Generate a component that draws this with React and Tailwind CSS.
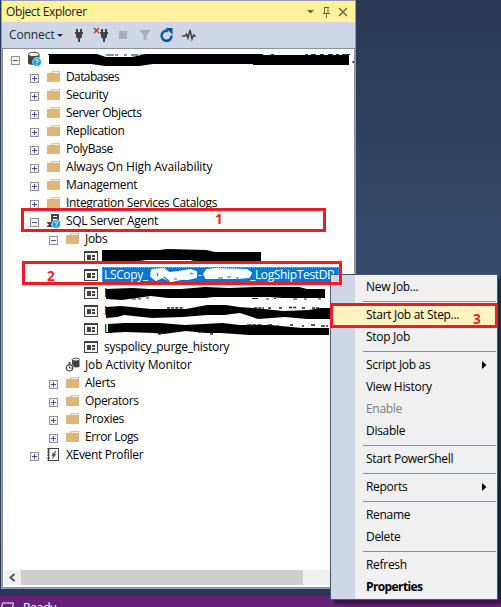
import React from "react";

const INK = "#424242";

function Expander({ open }) {
  return (
    <svg className="mt-[3px] h-[9px] w-[9px] shrink-0" viewBox="0 0 9 9" shapeRendering="crispEdges">
      <rect x="0.5" y="0.5" width="8" height="8" fill="#f4f4f4" stroke="#919191" />
      <path d="M2 4.5h5" stroke="#3a55a4" />
      {!open && <path d="M4.5 2v5" stroke="#3a55a4" />}
    </svg>
  );
}

function Folder() {
  return (
    <svg className="h-4 w-4" viewBox="0 0 16 16">
      <path d="M1 4h3.500l1.500-2h8v11H1z" fill="#dcb67a" />
      <path d="M5.800 4l.9-1.200h6.400V4z" fill="#f8f0e2" />
    </svg>
  );
}

function Help({ x, y }) {
  return (
    <g>
      <circle cx={x} cy={y} r="4" fill="#1ba1e2" />
      <path d={`M${x - 1.3} ${y - 1}c0-2 2.8-1.7 2.6 0c0 .9-1.3.8-1.3 1.8M${x} ${y + 1.7}v1`} fill="none" stroke="#fff" strokeWidth="1" />
    </g>
  );
}

function Server() {
  return (
    <svg className="h-4 w-4" viewBox="0 0 16 16">
      <path d="M1 3.5v8.6c0 1.2 2.3 2 5.5 2s6-.8 6-2V3.5z" fill={INK} />
      <ellipse cx="6.8" cy="3.4" rx="5.3" ry="2.1" fill="#f6f6f6" stroke={INK} strokeWidth="1" />
      <circle cx="10" cy="11" r="4.7" fill="#f6f6f6" />
      <Help x={10} y={11} />
    </svg>
  );
}

function Agent() {
  return (
    <svg className="h-4 w-4" viewBox="0 0 16 16">
      <path d="M5 1h8v9H5z" fill={INK} />
      <path d="M7 3.5h4M7 6.5h4" stroke="#fff" />
      <path d="M1 9h6v1L4.8 11.6 7 13v1H1v-1l2-1.4L1 10z" fill={INK} />
      <circle cx="10.2" cy="11" r="4.7" fill="#fff" />
      <Help x={10.2} y={11} />
    </svg>
  );
}

function Job() {
  return (
    <svg className="h-4 w-4" viewBox="0 0 16 16" shapeRendering="crispEdges">
      <path d="M1 2h14v12H1z" fill={INK} />
      <path d="M2 4h12v9H2z" fill="#f6f6f6" />
      <path d="M4 6h4v5H4zM9 6h3v2H9zM9 9h3v2H9z" fill={INK} />
    </svg>
  );
}

function Monitor() {
  return (
    <svg className="h-4 w-4" viewBox="0 0 16 16">
      <path d="M7 2.5v7c1 1.2 7 1.2 7.5 0v-7z" fill={INK} />
      <ellipse cx="10.8" cy="2.6" rx="3.6" ry="1.4" fill="#f6f6f6" stroke={INK} strokeWidth=".9" />
      <circle cx="4.5" cy="10.8" r="4.4" fill="#fff" />
      <circle cx="4.5" cy="10.8" r="3.2" fill="#fff" stroke={INK} strokeWidth="1.2" />
      <path d="M3 5.8h3M4.5 6v2M4.5 9v2.2M4.5 11h2" stroke={INK} fill="none" />
    </svg>
  );
}

function Profiler() {
  return (
    <svg className="h-4 w-4" viewBox="0 0 16 16">
      <rect x="2.5" y="1.5" width="10" height="12" fill="#f6f6f6" stroke={INK} />
      <path d="M2.5 1v13" stroke={INK} strokeWidth="2" strokeDasharray="2 1" />
      <path d="M10 4L6 7.600v1h1.700L6.500 11.500l3.300-4H8z" fill={INK} stroke={INK} strokeWidth=".5" />
    </svg>
  );
}

const icons = { folder: Folder, server: Server, agent: Agent, job: Job, monitor: Monitor, profiler: Profiler };
const indents = ["pl-[8px]", "pl-[27px]", "pl-[46px]", "pl-[64px]"];

const rows = [
  { level: 0, open: true, icon: "server", text: "" },
  { level: 1, open: false, icon: "folder", text: "Databases", track: "tracking-[-0.6px]" },
  { level: 1, open: false, icon: "folder", text: "Security" },
  { level: 1, open: false, icon: "folder", text: "Server Objects", track: "tracking-[-0.4px]" },
  { level: 1, open: false, icon: "folder", text: "Replication" },
  { level: 1, open: false, icon: "folder", text: "PolyBase", track: "tracking-[-0.45px]" },
  { level: 1, open: false, icon: "folder", text: "Always On High Availability", track: "tracking-[-0.13px]" },
  { level: 1, open: false, icon: "folder", text: "Management" },
  { level: 1, open: false, icon: "folder", text: "Integration Services Catalogs", track: "tracking-[-0.34px]" },
  { level: 1, open: true, icon: "agent", text: "SQL Server Agent" },
  { level: 2, open: true, icon: "folder", text: "Jobs" },
  { level: 3, icon: "job", text: "" },
  { level: 3, icon: "job", text: "selected" },
  { level: 3, icon: "job", text: "L" },
  { level: 3, icon: "job", text: "L" },
  { level: 3, icon: "job", text: "L" },
  { level: 3, icon: "job", text: "syspolicy_purge_history", track: "tracking-[-0.28px]" },
  { level: 2, icon: "monitor", text: "Job Activity Monitor", track: "tracking-[-0.1px]" },
  { level: 2, open: false, icon: "folder", text: "Alerts" },
  { level: 2, open: false, icon: "folder", text: "Operators", track: "tracking-[-0.4px]" },
  { level: 2, open: false, icon: "folder", text: "Proxies" },
  { level: 2, open: false, icon: "folder", text: "Error Logs", track: "tracking-[-0.4px]" },
  { level: 1, open: false, icon: "profiler", text: "XEvent Profiler", track: "tracking-[-0.33px]" },
];

function Row({ level, open, icon, text, track = "tracking-[-0.3px]" }) {
  const Icon = icons[icon];
  return (
    <div className={`flex h-[18px] items-center whitespace-nowrap ${indents[level]}`}>
      {open === undefined ? <span className="w-[9px] shrink-0" /> : <Expander open={open} />}
      <span className="ml-[7px] w-4 shrink-0">
        <Icon />
      </span>
      {text === "selected" ? (
        <span className="ml-[3px] flex h-[17px] w-[237px] items-center border border-dotted border-[#ff9a2e] bg-[#0078d7] pl-px tracking-[-0.35px] text-white">
          <span className="w-[94px]">LSCopy_</span>
          <span className="w-[52px]">-</span>
          <span>_LogShipTestDB</span>
        </span>
      ) : (
        <span className={`${level === 3 ? "ml-[5px]" : "ml-[4px]"} ${track}`}>{text}</span>
      )}
    </div>
  );
}

const menu = [
  { text: "New Job..." },
  null,
  { text: "Start Job at Step...", active: true },
  { text: "Stop Job" },
  null,
  { text: "Script Job as", sub: true },
  { text: "View History" },
  { text: "Enable", disabled: true },
  { text: "Disable" },
  null,
  { text: "Start PowerShell" },
  null,
  { text: "Reports", sub: true },
  null,
  { text: "Rename" },
  { text: "Delete" },
  null,
  { text: "Refresh" },
  { text: "Properties", bold: true },
];

function ContextMenu() {
  return (
    <div className="absolute top-[274px] left-[330px] h-[326px] w-[168px] border border-[#40587c] bg-[linear-gradient(to_right,#cfd6e5_24px,#f0f0f0_24px)] pt-px shadow-[4px_4px_3px_rgba(0,0,0,0.45)]">
      {menu.map((item, i) =>
        item === null ? (
          <div key={i} className="flex h-[6px] items-center pr-px pl-[32px]">
            <div className="h-px w-full bg-[#8794a2]" />
          </div>
        ) : (
          <div
            key={i}
            className={`flex h-[22px] items-center justify-between pr-[10px] pl-[35px] whitespace-nowrap ${item.active ? "bg-[#fdf4bf]" : ""} ${item.disabled ? "text-[#7d7d7d]" : ""} ${item.bold ? "font-bold tracking-[-0.6px]" : "tracking-[-0.3px]"}`}
          >
            <span>{item.text}</span>
            {item.sub && (
              <svg className="h-[8px] w-[5px]" viewBox="0 0 5 8">
                <path d="M0 0l4.500 4L0 8z" fill="#000" />
              </svg>
            )}
          </div>
        )
      )}
    </div>
  );
}

function Plug() {
  return <path d="M2 0h2v3h2V0h2v3h1v2H8v3L6 10v3H4v-3L2 8V5H1V3h1z" fill={INK} />;
}

function Toolbar() {
  return (
    <div className="flex h-[26px] items-center bg-[#cfd6e5] pl-[7px] text-[#1b293e]">
      <span className="w-[47px] text-[12px] tracking-[-0.1px]">Connect</span>
      <svg className="h-[26px] w-[160px]" viewBox="56 22 160 26">
        <path d="M57 34h6l-3 3z" fill="#1b293e" />
        <g transform="translate(74 29)"><Plug /></g>
        <g transform="translate(99 29)"><Plug /></g>
        <path d="M94 28l5 5M99 28l-5 5" stroke="#b5371e" strokeWidth="1.3" />
        <path d="M119 31h8v8h-8z" fill="#a9adb6" />
        <path d="M139 30h12l-4.500 5v6l-3-2v-4z" fill="#a9adb6" />
        <path d="M168 31a5 5 0 1 0 3.600 4.500" fill="none" stroke="#00539c" strokeWidth="2.400" />
        <path d="M165.500 28h7v6.500z" fill="#00539c" />
        <path d="M182 36h3l1.500-2 1.500 4 2-8 2 9 1.500-4 1.200 1H196" fill="none" stroke={INK} strokeWidth="1.500" />
      </svg>
    </div>
  );
}

/* Marker strokes hiding private names, with the letter tips that stay visible around them. */
function Redactions() {
  return (
    <svg className="absolute top-0 left-0 h-[607px] w-[501px]" viewBox="0 0 501 607">
      <path d="M48 54.500h4M106 55h8M115 55h3M124 55h3M131 55h7M140 55h8M150 55h3" stroke="#222" strokeWidth="1.2" />
      <path d="M271 54.500h3M305 54.500h3M311 54.500h5M320 54.500h4M328 54.500h5M336 54.500h3M342 54.500h8" stroke="#333" strokeWidth="1" />
      <path d="M352.500 62h1.500" stroke="#502030" strokeWidth="2" />
      <path d="M49 54H97L106 57H132L146 54H263V55H349V65H253V64H153L139 66H105L91 64H49z" />
      <path d="M102 250H160L167 249L206 250L215 252H261V261H194L190 260H147L139 261H102z" />
      <path d="M106 289L132 288L150 289L181 289L205 287L229 288L256 287H299L307 289H325V298H283L270 297H213L205 298H168L151 296L122 300L106 299z" />
      <path d="M132 299h4M138 299h3M146 298h3M252 298.500h6M266 299h3M274 298.500h2M293 299h4M304 299h3M318 299h3" stroke="#222" strokeWidth="1.2" />
      <path d="M106 307L121 306L151 309H186L207 305H226L239 307L264 309L283 311L309 310L320 308H330V319H307L285 317L258 319L240 313L224 315H207L183 317L152 318L124 315L117 317L106 318z" />
      <path d="M167 308h17M254 308h10M268 308h3M279 308h3M289 307.500h8M302 308h3M312 308h8" stroke="#222" strokeWidth="1.5" strokeDasharray="3 1.2" />
      <path d="M108 324L125 323L160 323L185 325L222 323L240 325L270 325L302 328H329V335H249L221 333H206L186 331L164 334L154 333L125 332L108 333z" />
      <path d="M247 325h15M268 325h4M277 326h2M290 325h3M302 326h2M311 325h5M321 326h7" stroke="#222" strokeWidth="1.5" strokeDasharray="4 1.2" />
      <path d="M198 332h3M210 334h3M158 334h3" stroke="#222" strokeWidth="1.5" />
      <path d="M152 270L164 269L169 273L179 272L190 270L196 272L196 277L188 279L181 279L171 281L162 277L156 280L151 276z" fill="#fff" stroke="#fff" strokeWidth="2" strokeLinejoin="round" />
      <path d="M207 270L216 269L247 270L251 273L249 277L238 278L216 278L206 278L204 274z" fill="#fff" stroke="#fff" strokeWidth="2" strokeLinejoin="round" />
      <path d="M157 273l1 3M164 277l5 4M174 279h3M190 273l3 1M218 278h5M227 277h4M236 278h3" stroke="#0078d7" strokeWidth="1.2" />
    </svg>
  );
}

const callout = "absolute border-[3px] border-[#ed1c24]";
const num = "absolute text-[13.5px] leading-[14px] font-bold text-[#ed1c24]";

export default function App() {
  return (
    <div className="relative flex h-[607px] w-[501px] flex-col overflow-hidden bg-[linear-gradient(to_bottom,#293955_0px,#35496a_240px,#35496a_400px,#293955_585px)] font-['Open_Sans',sans-serif] text-[12px] leading-[16px] tracking-[-0.2px] text-black">
      <div className="ml-px flex h-[589px] w-[355px] flex-col border border-[#8e9bbc]">
        <div className="flex h-[21px] shrink-0 items-center justify-between bg-[#fff29d] pr-[6px] pl-[4px] text-[#1b1b1b]">
          <span className="tracking-[-0.4px]">Object Explorer</span>
          <svg className="h-[14px] w-[44px]" viewBox="306 4 44 14">
            <g fill="none" stroke="#75633d">
              <path d="M308 9h7l-3.500 3.500z" fill="#75633d" stroke="none" />
              <path d="M325 6.500h5M325.500 6.500v6M329 6v6.500M324 12.500h7M327.500 13v4" />
              <path d="M340 7l8 8M348 7l-8 8" strokeWidth="1.500" />
            </g>
          </svg>
        </div>
        <Toolbar />
        <div className="flex grow flex-col border border-[#8a909c] bg-white pt-px">
          <div className="grow">
            {rows.map((r, i) => (
              <Row key={i} {...r} />
            ))}
          </div>
          <div className="mb-[2px] ml-px flex h-[15px] bg-[#f0f0f0]">
            <svg className="h-[15px] w-[17px]" viewBox="0 0 17 15">
              <path d="M10.500 4L6.500 7.500l4 3.500" fill="none" stroke="#555" strokeWidth="2" />
            </svg>
            <div className="w-[282px] bg-[#cdcdcd]" />
          </div>
        </div>
      </div>
      <div className="mt-[7px] flex h-[11px] items-start overflow-hidden bg-[#68217a] text-white">
        <svg className="mt-[6px] ml-px h-[10px] w-[15px]" viewBox="0 0 15 10">
          <path d="M1.500 1h11l-2 9H0z" fill="none" stroke="#fff" />
        </svg>
        <span className="mt-[4px] ml-[7px]">Ready</span>
      </div>
      <Redactions />
      <ContextMenu />
      <div className={`${callout} top-[208px] left-[21px] h-[24px] w-[305px]`} />
      <div className={`${callout} top-[261px] left-[22px] h-[24px] w-[320px]`} />
      <div className={`${callout} top-[303px] left-[330px] h-[25px] w-[168px]`} />
      <span className={`${num} top-[212px] left-[215px]`}>1</span>
      <span className={`${num} top-[269px] left-[47px]`}>2</span>
      <span className={`${num} top-[312px] left-[473px]`}>3</span>
    </div>
  );
}
